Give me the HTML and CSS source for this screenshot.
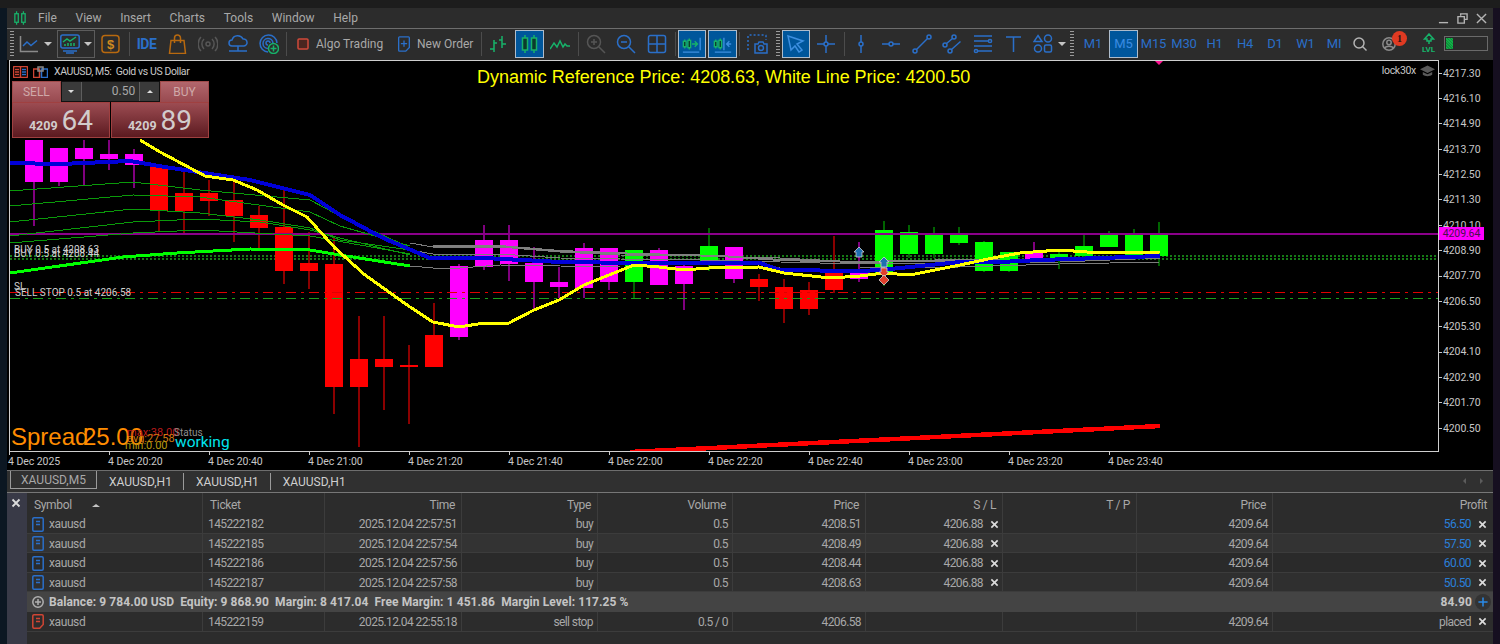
FILE: index.html
```html
<!DOCTYPE html>
<html lang="en">
<head>
<meta charset="utf-8">
<title>XAUUSD, M5</title>
<link rel="stylesheet" href="styles.css">
</head>
<body>
<div class="topstrip"></div>
<main class="app">
  <nav class="menubar">
    <svg class="logo" viewBox="0 0 14 16"><path class="ig" d="M3 0v3M3 13v3M11 0v3M11 13v3"/><rect class="ig" x="1" y="3" width="4" height="10"/><rect class="ig" x="9" y="3" width="4" height="10"/></svg>
    <span>File</span><span>View</span><span>Insert</span><span>Charts</span><span>Tools</span><span>Window</span><span>Help</span>
    <div class="winctl">
      <svg class="win" viewBox="0 0 12 12"><path class="iw" d="M1 10.5h10"/></svg>
      <svg class="win" viewBox="0 0 12 12"><path class="iw" d="M4 3V1h7v6H8.500M1 4h7v7H1z"/></svg>
      <svg class="win" viewBox="0 0 12 12"><path class="iw" d="M1 1l10 10M11 1L1 11"/></svg>
    </div>
  </nav>

  <div class="toolbar">
    <div class="tb w10"><i class="grip"></i></div>
    <div class="tb w24"><svg class="ic" viewBox="0 0 20 20"><path class="iy" d="M1.500 2v15.500H19"/><path class="ib" d="M4 12l4-4 4 3.500 6-5"/></svg></div>
    <div class="tb w13"><i class="caret"></i></div>
    <div class="tb w38 ml3 framed"><svg class="ic" viewBox="0 0 20 20"><rect class="ib" x="0.800" y="1" width="18.400" height="13" rx="2"/><path class="ib" d="M3 17h14M6 19h8"/><path class="ig" d="M3 8l4-3 3 2 6-4M5 12v-2M8 12v-3M11 12v-3M14 12V9"/></svg><i class="caret caret-in"></i></div>
    <div class="tb w32"><svg class="ic" viewBox="0 0 20 20"><rect class="io" x="1" y="1.500" width="17" height="17" rx="3"/><text class="dollar" x="9.500" y="15">$</text></svg></div>
    <div class="tb w4"><i class="sep"></i></div>
    <div class="tb w31"><span class="ide">IDE</span></div>
    <div class="tb w31"><svg class="ic" viewBox="0 0 20 20"><path class="io" d="M3 6.500h13l1.500 13h-16zM6.500 9V4a3 3 0 0 1 6 0v5"/></svg></div>
    <div class="tb w29"><svg class="ic" viewBox="0 0 20 20"><circle class="idim" cx="10" cy="10" r="2"/><path class="idim" d="M6 5a7 7 0 0 0 0 10M14 5a7 7 0 0 1 0 10M3 3a10 10 0 0 0 0 14M17 3a10 10 0 0 1 0 14"/></svg></div>
    <div class="tb w31"><svg class="ic" viewBox="0 0 20 20"><path class="ib" d="M4 12a3 3 0 0 1 0-6 6 6 0 0 1 11-1 3.500 3.500 0 0 1 1 7zM10 12v5M1 17h18"/></svg></div>
    <div class="tb w31"><svg class="ic" viewBox="0 0 20 20"><path class="ib" d="M9 18a8.500 8.500 0 1 1 9-9M9 14.500a5 5 0 1 1 5-5.500M9 11a2 2 0 1 1 2-2"/><circle class="pluscirc" cx="14.500" cy="14.500" r="5"/><path class="ig" d="M14.500 11.500v6M11.500 14.500h6"/></svg></div>
    <div class="tb w4"><i class="sep"></i></div>
    <div class="tb w102 labeled"><svg class="ic12" viewBox="0 0 12 12"><rect class="algo" x="1" y="1" width="10" height="10" rx="1"/></svg><span>Algo Trading</span></div>
    <div class="tb w87 labeled2"><svg class="ic14" viewBox="0 0 14 18"><path class="ib" d="M2 1h10a1 1 0 0 1 1 1v11l-4 4H2a1 1 0 0 1-1-1V2a1 1 0 0 1 1-1zM7 5v7M3.500 8.500h7"/></svg><span>New Order</span></div>
    <div class="tb w8"><i class="sep"></i></div>
    <div class="tb w25"><svg class="ic" viewBox="0 0 20 20"><path class="ig" d="M6 6v12M2 15h4M6 9h3M14 2v12M14 6h-3M14 10h4"/></svg></div>
    <div class="tb w29 ml5 sel"><svg class="ic" viewBox="0 0 20 20"><path class="ig" d="M5 1v3M5 16v3M14 1v3M14 16v3"/><rect class="ig2" x="2.500" y="4" width="5" height="12"/><rect class="ig2" x="11.500" y="4" width="5" height="12"/></svg></div>
    <div class="tb w32"><svg class="ic" viewBox="0 0 20 20"><path class="ig" d="M0 15l4-6 3 4 3-6 3 6 2-3 2 2h3"/></svg></div>
    <div class="tb w4"><i class="sep"></i></div>
    <div class="tb w31"><svg class="ic" viewBox="0 0 20 20"><circle class="idim2" cx="8" cy="8" r="6.500"/><path class="idim2" d="M8 5v6M5 8h6M13 13l6 6"/></svg></div>
    <div class="tb w30"><svg class="ic" viewBox="0 0 20 20"><circle class="ib" cx="8" cy="8" r="6.500"/><path class="ib" d="M5 8h6M13 13l6 6"/></svg></div>
    <div class="tb w32"><svg class="ic" viewBox="0 0 20 20"><rect class="ib" x="1.500" y="1.500" width="17" height="17" rx="2"/><path class="ib" d="M10 1.500v17M1.500 10h17"/></svg></div>
    <div class="tb w4"><i class="sep"></i></div>
    <div class="tb w28 ml1 sel"><svg class="ic" viewBox="0 0 22 20"><path class="ig" d="M3 5v10M8 4v12"/><rect class="ig2" x="1.500" y="7" width="3" height="6"/><rect class="ig2" x="6.500" y="6" width="3" height="8"/><path class="ig" d="M11 10h5M14 7l3 3-3 3"/><path class="ibl" d="M20 3v14M1 19h18"/></svg></div>
    <div class="tb w29 ml2 sel"><svg class="ic" viewBox="0 0 22 20"><path class="ig" d="M3 5v10M8 4v12"/><rect class="ig2" x="1.500" y="7" width="3" height="6"/><rect class="ig2" x="6.500" y="6" width="3" height="8"/><path class="ibl" d="M12 3v14M2 19h18M20 10h-5M18 7l-3 3 3 3"/></svg></div>
    <div class="tb w4"><i class="sep"></i></div>
    <div class="tb w33"><svg class="ic22" viewBox="0 0 22 20"><path class="ibd" d="M1 16V2a1 1 0 0 1 1-1h16a1 1 0 0 1 1 1v4"/><path class="ib" d="M8 10h3l1-2h4l1 2h3v9H8z"/><circle class="ib" cx="14" cy="14" r="2.500"/></svg></div>
    <div class="tb w7"><i class="grip"></i></div>
    <div class="tb w28 ml1 sel"><svg class="ic" viewBox="0 0 20 20"><path class="ibl" d="M2 2l15 5-6 3 5 6-3 2-4-6-4 4z"/></svg></div>
    <div class="tb w32"><svg class="ic" viewBox="0 0 20 20"><circle class="ib" cx="10" cy="10" r="2"/><path class="ib" d="M10 1v7M10 12v7M1 10h7M12 10h7"/></svg></div>
    <div class="tb w4"><i class="sep"></i></div>
    <div class="tb w30"><svg class="ic" viewBox="0 0 20 20"><circle class="ib" cx="10" cy="10" r="2"/><path class="ib" d="M10 1v7M10 12v7"/></svg></div>
    <div class="tb w30"><svg class="ic" viewBox="0 0 20 20"><circle class="ib" cx="10" cy="10" r="2"/><path class="ib" d="M1 10h7M12 10h7"/></svg></div>
    <div class="tb w31"><svg class="ic" viewBox="0 0 20 20"><circle class="ib" cx="3" cy="17" r="2"/><circle class="ib" cx="17" cy="3" r="2"/><path class="ib" d="M4.500 15.500l11-11"/></svg></div>
    <div class="tb w30"><svg class="ic" viewBox="0 0 20 20"><circle class="ib" cx="3" cy="11" r="2"/><circle class="ib" cx="12" cy="3" r="2"/><circle class="ib" cx="8" cy="17" r="2"/><path class="ib" d="M4.500 9.500l6-5M9.500 15.500l9-8"/></svg></div>
    <div class="tb w32"><svg class="ic" viewBox="0 0 20 20"><path class="ib" d="M1 2h18M1 7h14M1 12h18M5 17h14"/><circle class="ib" cx="17" cy="7" r="1.600"/><circle class="ib" cx="3" cy="17" r="1.600"/></svg></div>
    <div class="tb w30"><svg class="ic" viewBox="0 0 20 20"><path class="ib" d="M2 3h15M9.500 3v15"/></svg></div>
    <div class="tb w28"><svg class="ic" viewBox="0 0 20 20"><path class="ib" d="M5 1.500l4 6H1z"/><circle class="ib" cx="15" cy="4.500" r="3.500"/><circle class="ib" cx="5" cy="14.500" r="3.500"/><rect class="ib" x="11.500" y="11" width="7" height="7" rx="1.500"/></svg></div>
    <div class="tb w10"><i class="caret"></i></div>
    <div class="tb w10"><i class="grip"></i></div>
    <div class="tb w32 tf">M1</div>
    <div class="tb w29 tf sel">M5</div>
    <div class="tb w31 tf">M15</div>
    <div class="tb w30 tf">M30</div>
    <div class="tb w31 tf">H1</div>
    <div class="tb w30 tf">H4</div>
    <div class="tb w30 tf">D1</div>
    <div class="tb w31 tf">W1</div>
    <div class="tb w26 tf">MI</div>
    <div class="tb w26"><svg class="ic14" viewBox="0 0 14 14"><circle class="iw" cx="6" cy="6" r="5"/><path class="iw" d="M9.500 9.500l4 4"/></svg></div>
    <div class="tb w40 acct"><svg class="ic14" viewBox="0 0 14 14"><circle class="iy" cx="7" cy="7" r="6.200"/><circle class="iy" cx="7" cy="5.500" r="2.200"/><path class="iy" d="M2.500 11.500c1-3 8-3 9 0"/></svg><b class="badge">1</b></div>
    <div class="tb w31 lvl"><svg class="ic12" viewBox="0 0 12 12"><path class="ig" d="M6 1L1.500 6h2.500v2h4V6h2.500zM6 8v3"/></svg><span>LVL</span></div>
    <div class="tb w44"><div class="meter"><i class="meter-fill"></i></div></div>
  </div>

  <section class="chartwrap">
    <div class="plot">
      <svg class="canvas" viewBox="10 61 1428 390">
        <path class="line-dot" d="M10 256H1438M10 259H1438"/>
        <g class="wk-m">
          <path d="M34 140V226M59 148V186M84 140V186M109 140V170M134 149V188M459 264V340M484 225V270M509 225V281M534 247V309M559 267V298M584 243V298M609 248V290M659 248V285M684 265V310M734 247V283M859 242V282M1034 242V259"/>
        </g>
        <g class="wk-r">
          <path d="M159 165V232M184 172V234M209 180V216M234 182V242M259 206V250M284 190V284M309 232V289M334 238V414M359 316V447M384 316V410M409 345V424M434 303V367M759 274V301M784 279V323M809 282V315M834 236V293"/>
        </g>
        <g class="wk-g">
          <path d="M634 250V298M709 228V271M884 221V286M909 225V258M934 227V258M959 227V245M984 241V272M1009 252V272M1059 250V269M1084 235V258M1109 231V247M1134 229V256M1159 222V266"/>
        </g>
        <g class="bd-m">
          <rect x="25" y="140" width="18" height="42"/><rect x="50" y="148" width="18" height="34"/><rect x="75" y="148" width="18" height="11"/><rect x="100" y="154" width="18" height="5"/><rect x="125" y="154" width="18" height="11"/>
          <rect x="450" y="266" width="18" height="71"/><rect x="475" y="240" width="18" height="27"/><rect x="500" y="240" width="18" height="24"/><rect x="525" y="263" width="18" height="19"/><rect x="550" y="282" width="18" height="5"/><rect x="575" y="248" width="18" height="40"/><rect x="600" y="248" width="18" height="34"/><rect x="650" y="250" width="18" height="35"/><rect x="675" y="266" width="18" height="18"/><rect x="725" y="247" width="18" height="32"/><rect x="850" y="273" width="18" height="6"/><rect x="1025" y="253" width="18" height="7"/>
        </g>
        <g class="bd-r">
          <rect x="150" y="167" width="18" height="44"/><rect x="175" y="193" width="18" height="18"/><rect x="200" y="193" width="18" height="8"/><rect x="225" y="200" width="18" height="16"/><rect x="250" y="215" width="18" height="13"/><rect x="275" y="227" width="18" height="44"/><rect x="300" y="263" width="18" height="8"/><rect x="325" y="264" width="18" height="123"/><rect x="350" y="359" width="18" height="28"/><rect x="375" y="359" width="18" height="8"/><rect x="400" y="365" width="18" height="2"/><rect x="425" y="335" width="18" height="32"/>
          <rect x="750" y="279" width="18" height="8"/><rect x="775" y="287" width="18" height="22"/><rect x="800" y="290" width="18" height="19"/><rect x="825" y="273" width="18" height="17"/>
        </g>
        <g class="bd-g">
          <rect x="625" y="250" width="18" height="32"/><rect x="700" y="246" width="18" height="19"/><rect x="875" y="230" width="18" height="43"/><rect x="900" y="232" width="18" height="22"/><rect x="925" y="235" width="18" height="19"/><rect x="950" y="235" width="18" height="8"/><rect x="975" y="242" width="18" height="29"/><rect x="1000" y="252" width="18" height="19"/><rect x="1050" y="254" width="18" height="6"/><rect x="1075" y="246" width="18" height="10"/><rect x="1100" y="234" width="18" height="13"/><rect x="1125" y="234" width="18" height="22"/><rect x="1150" y="234" width="18" height="22"/>
        </g>
        <path class="line-purple" d="M10 234H1438"/>
        <path class="line-reddash" d="M10 292.500H1438"/>
        <path class="line-greendash" d="M10 298.500H1438"/>
        <g class="ma-thin">
          <polyline points="10,191 133,182 200,190 310,200 340,216 400,243"/>
          <polyline points="10,206 133,195 200,197 310,212 340,226 410,246"/>
          <polyline points="10,222 133,209 200,213 260,220 310,228 340,240 410,250"/>
          <polyline points="10,236 133,222 200,219 260,222 310,230 340,238 410,255"/>
          <polyline points="10,243 133,233 200,230 310,236 410,254"/>
        </g>
        <g class="ma-gray">
          <polyline points="410,243 433,247 500,247 560,252 620,255 700,256 780,258 860,262 960,261 1060,260 1160,256"/>
          <polyline points="410,250 433,254 500,254 560,258 620,259 700,260 780,262 860,264 960,263 1060,262 1160,258"/>
          <polyline points="410,266 433,268 460,268 500,265 620,267 700,267 780,268 860,268 960,267 1060,264 1160,262"/>
        </g>
        <polyline class="ma-gray-bold" points="433,246 500,246 560,251 640,254 720,256 780,260 860,262 960,260 1000,260"/>
        <polyline class="ma-lime" points="10,273 123,257 177,253 250,249 310,250 340,255 410,266"/>
        <polyline class="ma-blue" points="10,163 60,164 130,161 165,167 250,180 310,195 340,215 383,238 430,258 484,258 560,262 640,263 700,263 760,263 780,270 860,271 880,270 900,268 960,262 1000,262 1040,260 1100,258 1160,256"/>
        <polyline class="ma-yellow" points="140,140 160,152 190,168 205,176 233,180 257,190 283,205 307,217 335,248 365,275 410,307 433,322 459,327 484,323 509,323 534,310 559,300 584,285 609,275 634,265 659,267 684,270 709,268 759,267 784,273 830,278 860,276 884,273 910,275 960,265 993,258 1020,253 1060,250 1100,253 1160,252"/>
        <polyline class="ma-red" points="630,452 1160,426"/>
        <polygon class="mark-up" points="859,247 864,252 862,252 862,257 856,257 856,252 854,252"/>
        <polygon class="mark-up" points="884,257 889,262 887,262 887,267 881,267 881,262 879,262"/>
        <polygon class="mark-dn" points="881,268 887,268 887,272 889,272 884,277 879,272 881,272"/>
        <polygon class="mark-dn" points="884,275 889,280 884,285 879,280"/>
        <polygon class="mark-top" points="1155,61 1163,61 1159,65"/>
        <g class="order-label">
          <text x="14" y="253">BUY 0.5 at 4208.63</text>
          <text x="14" y="257">BUY 0.5 at 4208.44</text>
          <text x="14" y="290">SL</text>
          <text x="15" y="296">SELL STOP 0.5 at 4206.58</text>
        </g>
        <text class="stat-spread" x="11" y="445">Spread</text>
        <text class="stat-spread" x="83" y="445">25.00</text>
        <text class="stat-max" x="127" y="436">max:38.00</text>
        <text class="stat-avg" x="127" y="442">avg:27.58</text>
        <text class="stat-min" x="125" y="449">min:0.00</text>
        <text class="stat-status" x="174" y="436">Status</text>
        <text class="stat-work" x="175" y="447">working</text>
      </svg>
      <div class="chart-title">
        <svg class="ch-ic" viewBox="0 0 15 12"><rect class="ired" x="0.500" y="0.500" width="14" height="11" rx="1"/><path class="ired" d="M7.500 1v10M2 3.500h4M2 6h4M2 8.500h4"/><path class="ib" d="M9 3.500h4M9 6h4M9 8.500h4"/></svg>
        <svg class="ch-ic" viewBox="0 0 15 12"><path class="ired" d="M.5 3h6v8.500h-6z"/><path class="ib" d="M8.500 3h6v8.500h-6z"/><path class="iy" d="M5 1h5v4H5z"/></svg>
        <span>XAUUSD, M5:&nbsp; Gold vs US Dollar</span>
      </div>
      <div class="headline">Dynamic Reference Price: 4208.63, White Line Price: 4200.50</div>
      <div class="lock"><span>lock30x</span><svg class="hat" viewBox="0 0 16 12"><path d="M8 0L0 4l8 4 8-4zM3 7v3c2 2 8 2 10 0V7L8 9.500z"/></svg></div>
      <div class="trade">
        <div class="trade-top">
          <div class="head"><span>SELL</span></div>
          <div class="spin"><i class="sp-btn"><i class="caret caret-sm"></i></i><span class="sp-val">0.50</span><i class="sp-btn"><i class="caret caret-up"></i></i></div>
          <div class="head"><span>BUY</span></div>
        </div>
        <div class="trade-bot">
          <div class="quote"><b>4209</b><span>64</span></div>
          <div class="quote"><b>4209</b><span>89</span></div>
        </div>
      </div>
    </div>
    <div class="price-axis">
      <span>4217.30</span><span>4216.10</span><span>4214.90</span><span>4213.70</span><span>4212.50</span><span>4211.30</span><span>4210.10</span><span>4208.90</span><span>4207.70</span><span>4206.50</span><span>4205.30</span><span>4204.10</span><span>4202.90</span><span>4201.70</span><span>4200.50</span>
      <em class="price-tag">4209.64</em>
    </div>
    <div class="time-axis">
      <span>4 Dec 2025</span><span>4 Dec 20:20</span><span>4 Dec 20:40</span><span>4 Dec 21:00</span><span>4 Dec 21:20</span><span>4 Dec 21:40</span><span>4 Dec 22:00</span><span>4 Dec 22:20</span><span>4 Dec 22:40</span><span>4 Dec 23:00</span><span>4 Dec 23:20</span><span>4 Dec 23:40</span>
    </div>
  </section>

  <div class="tabs">
    <span class="tab active">XAUUSD,M5</span><span class="tab">XAUUSD,H1</span><span class="tab">XAUUSD,H1</span><span class="tab last">XAUUSD,H1</span>
    <div class="tabnav"><i class="nav-l"></i><i class="nav-r"></i></div>
  </div>

  <section class="panel">
    <aside class="rail"><svg class="x-big" viewBox="0 0 10 10"><path d="M1.500 1.500l7 7M8.500 1.500l-7 7"/></svg></aside>
    <div class="grid">
      <div class="row hdr">
        <div class="c sym-h">Symbol<i class="caret caret-up sort"></i></div><div class="c l">Ticket</div><div class="c">Time</div><div class="c">Type</div><div class="c">Volume</div><div class="c">Price</div><div class="c">S / L</div><div class="c">T / P</div><div class="c">Price</div><div class="c">Profit</div>
      </div>
      <div class="row pos">
        <div class="c sym"><svg class="doc" viewBox="0 0 12 15"><path class="ib" d="M2 .8h8a1.200 1.200 0 0 1 1.200 1.200v11a1.200 1.200 0 0 1-1.200 1.200H2A1.200 1.200 0 0 1 .8 13V2A1.200 1.200 0 0 1 2 .8zM4 4.500h4M4 7.500h4"/></svg>xauusd</div>
        <div class="c l2">145222182</div><div class="c">2025.12.04 22:57:51</div><div class="c">buy</div><div class="c">0.5</div><div class="c">4208.51</div><div class="c x">4206.88<svg class="x-s" viewBox="0 0 10 10"><path d="M1.500 1.500l7 7M8.500 1.500l-7 7"/></svg></div><div class="c"></div><div class="c">4209.64</div><div class="c xe pf">56.50<svg class="x-s" viewBox="0 0 10 10"><path d="M1.500 1.500l7 7M8.500 1.500l-7 7"/></svg></div>
      </div>
      <div class="row pos alt">
        <div class="c sym"><svg class="doc" viewBox="0 0 12 15"><path class="ib" d="M2 .8h8a1.200 1.200 0 0 1 1.200 1.200v11a1.200 1.200 0 0 1-1.200 1.200H2A1.200 1.200 0 0 1 .8 13V2A1.200 1.200 0 0 1 2 .8zM4 4.500h4M4 7.500h4"/></svg>xauusd</div>
        <div class="c l2">145222185</div><div class="c">2025.12.04 22:57:54</div><div class="c">buy</div><div class="c">0.5</div><div class="c">4208.49</div><div class="c x">4206.88<svg class="x-s" viewBox="0 0 10 10"><path d="M1.500 1.500l7 7M8.500 1.500l-7 7"/></svg></div><div class="c"></div><div class="c">4209.64</div><div class="c xe pf">57.50<svg class="x-s" viewBox="0 0 10 10"><path d="M1.500 1.500l7 7M8.500 1.500l-7 7"/></svg></div>
      </div>
      <div class="row pos dark">
        <div class="c sym"><svg class="doc" viewBox="0 0 12 15"><path class="ib" d="M2 .8h8a1.200 1.200 0 0 1 1.200 1.200v11a1.200 1.200 0 0 1-1.200 1.200H2A1.200 1.200 0 0 1 .8 13V2A1.200 1.200 0 0 1 2 .8zM4 4.500h4M4 7.500h4"/></svg>xauusd</div>
        <div class="c l2">145222186</div><div class="c">2025.12.04 22:57:56</div><div class="c">buy</div><div class="c">0.5</div><div class="c">4208.44</div><div class="c x">4206.88<svg class="x-s" viewBox="0 0 10 10"><path d="M1.500 1.500l7 7M8.500 1.500l-7 7"/></svg></div><div class="c"></div><div class="c">4209.64</div><div class="c xe pf">60.00<svg class="x-s" viewBox="0 0 10 10"><path d="M1.500 1.500l7 7M8.500 1.500l-7 7"/></svg></div>
      </div>
      <div class="row pos mid">
        <div class="c sym"><svg class="doc" viewBox="0 0 12 15"><path class="ib" d="M2 .8h8a1.200 1.200 0 0 1 1.200 1.200v11a1.200 1.200 0 0 1-1.200 1.200H2A1.200 1.200 0 0 1 .8 13V2A1.200 1.200 0 0 1 2 .8zM4 4.500h4M4 7.500h4"/></svg>xauusd</div>
        <div class="c l2">145222187</div><div class="c">2025.12.04 22:57:58</div><div class="c">buy</div><div class="c">0.5</div><div class="c">4208.63</div><div class="c x">4206.88<svg class="x-s" viewBox="0 0 10 10"><path d="M1.500 1.500l7 7M8.500 1.500l-7 7"/></svg></div><div class="c"></div><div class="c">4209.64</div><div class="c xe pf">50.50<svg class="x-s" viewBox="0 0 10 10"><path d="M1.500 1.500l7 7M8.500 1.500l-7 7"/></svg></div>
      </div>
      <div class="balance">
        <svg class="doc" viewBox="0 0 12 12"><circle class="iy2" cx="6" cy="6" r="5.200"/><path class="iy2" d="M3 6h6M6 3v6"/></svg>
        <span class="bal-text">Balance: 9 784.00 USD&nbsp; Equity: 9 868.90&nbsp; Margin: 8 417.04&nbsp; Free Margin: 1 451.86&nbsp; Margin Level: 117.25 %</span>
        <span class="bal-total">84.90</span>
        <span class="bal-plus"><svg class="plus" viewBox="0 0 12 12"><path d="M6 .5v11M.5 6h11"/></svg></span>
      </div>
      <div class="row">
        <div class="c sym"><svg class="doc" viewBox="0 0 12 15"><path class="ired" d="M2 .8h8a1.200 1.200 0 0 1 1.200 1.200v8.500l-3.500 3.700H2A1.200 1.200 0 0 1 .8 13V2A1.200 1.200 0 0 1 2 .8zM4 4.500h4M4 7.500h4"/></svg>xauusd</div>
        <div class="c l2">145222159</div><div class="c">2025.12.04 22:55:18</div><div class="c">sell stop</div><div class="c">0.5 / 0</div><div class="c">4206.58</div><div class="c"></div><div class="c"></div><div class="c">4209.64</div><div class="c xe">placed<svg class="x-s" viewBox="0 0 10 10"><path d="M1.500 1.500l7 7M8.500 1.500l-7 7"/></svg></div>
      </div>
    </div>
  </section>
</main>
</body>
</html>
```

FILE: styles.css
```css
* { box-sizing: border-box; }
html, body { margin: 0; height: 644px; overflow: hidden; }
body {
  background: linear-gradient(90deg, #0c1722 0 7px, #160f20 7px);
  font-family: Roboto, "Liberation Sans", sans-serif;
  color: #a8a8a8;
}
.topstrip { height: 8px; background: #1d1d1d; }
.app { margin: 0 7px; width: 1486px; height: 636px; background: #2c2c2c; display: flex; flex-direction: column; }

/* icon stroke palette */
svg { display: block; }
.ib, .ibl, .ibd, .ig, .ig2, .io, .iy, .iy2, .iw, .idim, .idim2, .ired { fill: none; stroke-width: 1.500; }
.ib { stroke: #2a6fc9; }
.ibl { stroke: #3d8fe0; }
.ibd { stroke: #2a6fc9; stroke-dasharray: 2 2; }
.ig { stroke: #17b26a; }
.ig2 { stroke: #17b26a; fill: #0b3b2c; }
.io { stroke: #b8690f; }
.iy { stroke: #8a8a8a; }
.iy2 { stroke: #b0b0b0; }
.iw { stroke: #b4b4b4; }
.idim { stroke: #565656; }
.idim2 { stroke: #555; }
.ired { stroke: #cf4534; }
.pluscirc { fill: #2c2c2c; stroke: #17b26a; stroke-width: 1.500; }
.algo { fill: #4a2620; stroke: #d0493a; stroke-width: 1.500; }
.dollar { fill: #d08a20; font: 700 13px "Liberation Sans", sans-serif; text-anchor: middle; }
.ic { width: 20px; height: 20px; }
.ic22 { width: 22px; height: 20px; }
.ic12 { width: 12px; height: 12px; flex: none; }
.ic14 { width: 14px; height: 16px; flex: none; }

/* menu */
.menubar { height: 21px; flex: none; display: flex; align-items: center; gap: 18.700px; font-size: 12px; color: #a9a9a9; padding-left: 7px; border-bottom: 1px solid #6e6e6e; }
.logo { width: 12px; height: 14px; margin-right: -6.700px; }
.winctl { margin-left: auto; display: flex; gap: 8px; padding-right: 6px; }
.win { width: 11px; height: 11px; }

/* toolbar */
.toolbar { height: 31px; flex: none; display: flex; align-items: center; padding-bottom: 2px; }
.tb { flex: none; height: 28px; display: flex; align-items: center; justify-content: center; font-size: 12px; color: #a9a9a9; }
.w4 { width: 4px; } .w7 { width: 7px; } .w8 { width: 8px; } .w10 { width: 10px; } .w13 { width: 13px; }
.w24 { width: 24px; } .w25 { width: 25px; } .w26 { width: 26px; } .w28 { width: 28px; } .w29 { width: 29px; }
.w30 { width: 30px; } .w31 { width: 31px; } .w32 { width: 32px; } .w33 { width: 33px; } .w38 { width: 38px; }
.w40 { width: 40px; } .w44 { width: 44px; } .w87 { width: 87px; } .w102 { width: 102px; }
.ml1 { margin-left: 1px; } .ml2 { margin-left: 2px; } .ml3 { margin-left: 3px; } .ml5 { margin-left: 5px; }
.grip { display: block; width: 4px; height: 28px; background: radial-gradient(circle, #9a9a9a 0 1px, transparent 1.100px) 0 0 / 2px 3px; }
.sep { display: block; width: 1px; height: 24px; background: #4c4c4c; }
.caret { display: block; width: 0; height: 0; border: 4px solid transparent; border-top: 4px solid #c4c4c4; border-bottom: 0; }
.caret-in { margin-left: 4px; }
.framed { border: 1px solid #5c5c5c; justify-content: flex-start; padding-left: 2px; }
.sel { background: #00569b; border: 1px solid #aebccb; color: #2f84e0; }
.ide { font: 700 14px Roboto, sans-serif; color: #2a6fc9; letter-spacing: -.5px; }
.labeled { justify-content: flex-start; padding-left: 9px; gap: 7px; }
.labeled2 { justify-content: flex-start; padding-left: 7px; gap: 6px; }
.tf { font-size: 13px; color: #2a6fc9; letter-spacing: -.2px; }
.tf.sel { color: #3a8be2; }
.acct { position: relative; justify-content: flex-start; padding-left: 9px; }
.badge { position: absolute; left: 19px; top: 1px; width: 15px; height: 15px; border-radius: 50%; background: #e03a22; color: #2a1512; font: 700 10px/15px "Liberation Serif", serif; text-align: center; }
.lvl { flex-direction: column; gap: 0; color: #17b26a; font: 700 8px/9px Roboto, sans-serif; }
.meter { width: 44px; height: 15px; border: 1px solid #6a6a6a; background: #2a2a2a; padding: 1px; }
.meter-fill { display: block; width: 7px; height: 100%; background: repeating-linear-gradient(45deg, #0f8f3a 0 1px, #12b048 1px 2px); }

/* chart */
.chartwrap { flex: none; height: 410px; background: #000; display: grid; grid-template-columns: 1432px 54px; grid-template-rows: 392px 18px; }
.plot { position: relative; margin-left: 2px; border: 1px solid #cfcfcf; background: #000; overflow: hidden; }
.canvas { width: 1428px; height: 390px; }
.canvas path, .canvas rect, .canvas polyline { shape-rendering: crispEdges; }
.wk-m path { stroke: #80007f; stroke-width: 2; fill: none; }
.wk-r path { stroke: #8b0000; stroke-width: 2; fill: none; }
.wk-g path { stroke: #006400; stroke-width: 2; fill: none; }
.bd-m { fill: #ff00ff; }
.bd-r { fill: #ff0000; }
.bd-g { fill: #00ff00; }
.line-dot { stroke: #167a16; stroke-width: 2; stroke-dasharray: 2 2; fill: none; }
.line-purple { stroke: #8b008b; stroke-width: 2; fill: none; }
.line-reddash { stroke: #e00000; stroke-width: 1; stroke-dasharray: 10 5 3 5; fill: none; }
.line-greendash { stroke: #1aa01a; stroke-width: 1; stroke-dasharray: 10 5 3 5; fill: none; }
.ma-thin polyline { fill: none; stroke: #0a9a0a; stroke-width: 1; }
.ma-gray polyline { fill: none; stroke: #7c7c7c; stroke-width: 1; }
.ma-gray-bold { fill: none; stroke: #808080; stroke-width: 2; }
.ma-lime { fill: none; stroke: #00ff00; stroke-width: 3; }
.ma-blue { fill: none; stroke: #0000d8; stroke-width: 4; }
.ma-yellow { fill: none; stroke: #ffff00; stroke-width: 3; }
.ma-red { fill: none; stroke: #ff0000; stroke-width: 4.500; }
.mark-up { fill: #1f6fb0; stroke: #cfcfcf; stroke-width: .8; }
.mark-dn { fill: #e0402c; stroke: #cfcfcf; stroke-width: .8; }
.mark-top { fill: #ff1493; }
.order-label text { fill: #d0d0d0; font: 10px Roboto, sans-serif; }
.stat-spread { fill: #ff8c00; font: 24px "Liberation Sans", sans-serif; }
.stat-max { fill: #b81a1a; font: 11px Roboto, sans-serif; }
.stat-avg { fill: #d27a10; font: 11px Roboto, sans-serif; }
.stat-min { fill: #b89a10; font: 11px Roboto, sans-serif; }
.stat-status { fill: #8f8f8f; font: 10px Roboto, sans-serif; }
.stat-work { fill: #00e5ee; font: 15.500px Roboto, sans-serif; }

.chart-title { position: absolute; left: 3px; top: 3px; height: 15px; display: flex; align-items: center; gap: 5px; font-size: 10.500px; letter-spacing: -.4px; color: #c8c8c8; }
.ch-ic { width: 15px; height: 12px; flex: none; }
.chart-title span { margin-left: 1px; }
.headline { position: absolute; left: 467px; top: 4px; font: 18px/24px "Liberation Sans", sans-serif; letter-spacing: -.035px; color: #ffff00; white-space: nowrap; }
.lock { position: absolute; right: 3px; top: 3px; display: flex; align-items: center; gap: 4px; font-size: 10.500px; letter-spacing: -.3px; color: #c8c8c8; }
.hat { width: 15px; height: 12px; fill: #5a5a5a; }

.trade { position: absolute; left: 2px; top: 20px; width: 197px; }
.trade-top { display: flex; height: 21px; align-items: stretch; }
.head { width: 49px; padding: 0 3px; background: linear-gradient(#b2666c, #984a50); border: 1px solid #a04a4a; border-bottom: 0; text-align: center; font-size: 12px; line-height: 20px; color: #cfa9a9; }
.head span { display: block; height: 21px; border-bottom: 1px solid #c88b88; }
.spin { width: 100px; height: 21px; display: flex; background: #333; border: 1px solid #111; }
.sp-btn { display: flex; width: 19px; align-items: center; justify-content: center; background: #3a3a3a; }
.sp-val { flex: 1; text-align: right; padding-right: 4px; font-size: 12px; line-height: 19px; color: #a8a8a8; border-left: 1px solid #5e5e5e; border-right: 1px solid #5e5e5e; background: #2e2e2e; }
.caret-sm { border-width: 3px; border-top-color: #ddd; border-bottom: 0; }
.caret-up { border: 3px solid transparent; border-bottom: 3px solid #ddd; border-top: 0; }
.trade-bot { display: flex; gap: 1px; }
.quote { width: 98px; height: 36px; background: linear-gradient(#9c4c52, #5c1a20); border: 1px solid #a04040; display: flex; align-items: baseline; justify-content: center; color: #d2cccc; padding-top: 4px; gap: 4px; }
.quote b { font-size: 12.500px; }
.quote span { font-size: 28px; line-height: 28px; }

.price-axis { position: relative; display: grid; grid-auto-rows: 25.360px; align-content: start; font-size: 10.500px; letter-spacing: -.1px; color: #c8c8c8; padding-top: .5px; }
.price-axis span { display: flex; align-items: center; gap: 1px; line-height: 25.360px; }
.price-axis span::before { content: ""; width: 3px; height: 1px; background: #c8c8c8; }
.price-tag { position: absolute; left: 0; top: 167px; width: 45px; height: 13px; background: #ff00ff; color: #4a104a; font-style: normal; font-size: 10.500px; line-height: 13px; text-align: center; }
.time-axis { grid-column: 1 / 3; display: flex; padding-left: 1px; font-size: 10.500px; letter-spacing: -.05px; color: #c8c8c8; }
.time-axis span { width: 100px; flex: none; line-height: 19px; position: relative; }
.time-axis span::before { content: ""; position: absolute; left: 1px; top: 0; width: 1px; height: 3px; background: #c8c8c8; }

/* tabs */
.tabs { height: 23px; flex: none; display: flex; align-items: flex-start; padding-left: 3px; border-top: 1px solid #6e6e6e; border-bottom: 1px solid #777; background: #303030; font-size: 12px; color: #cfcfcf; }
.tab { height: 17px; line-height: 19px; padding: 0 11px 0 12px; border-right: 1px solid #9a9a9a; margin-top: 2px; }
.tab.last { border-right: 0; }
.tab.active { width: 87px; height: 18px; margin-top: 0; border: 1px solid #9a9a9a; border-top: 0; padding: 0; text-align: center; color: #a8a8a8; line-height: 18px; }
.tabnav { margin-left: auto; display: flex; gap: 14px; padding: 7px 10px 0 0; }
.nav-l, .nav-r { display: block; width: 0; height: 0; border: 3px solid transparent; }
.nav-l { border-right-color: #5c5c5c; border-left: 0; }
.nav-r { border-left-color: #5c5c5c; border-right: 0; }

/* table */
.panel { flex: 1; display: flex; min-height: 0; }
.rail { width: 20px; flex: none; background: #393a47; padding: 5px 0 0 4px; }
.x-big { width: 10px; height: 10px; }
.x-big path, .x-s path { stroke: #dcdcdc; stroke-width: 1.800; fill: none; }
.grid { flex: 1; display: flex; flex-direction: column; font-size: 12px; }
.row { display: grid; grid-template-columns: 176px 122px 137px 136px 135px 133px 137px 134px 136px 1fr; height: 19.600px; border-bottom: 1px solid #3c3c3c; background: #2c2c2c; letter-spacing: -.6px; }
.row.alt { background: #333; }
.row.dark { background: #2a2a2a; }
.row.mid { background: #2f2f2f; }
.row.hdr { height: 21px; border-bottom: 0; letter-spacing: -.35px; }
.hdr .c { padding: 3px 6px 0 0; }
.c { display: flex; align-items: center; justify-content: flex-end; padding-right: 4px; border-right: 1px solid #3c3c3c; white-space: nowrap; line-height: 18px; min-width: 0; }
.pos .c { padding-top: 1px; }
.c:last-child { border-right: 0; }
.hdr .c.l { justify-content: flex-start; padding-left: 7px; }
.c.l2 { justify-content: flex-start; padding-left: 5px; }
.c.sym { justify-content: flex-start; padding-left: 5px; gap: 5px; letter-spacing: -.4px; }
.hdr .c.sym-h { justify-content: flex-start; padding-left: 7px; }
.sort { margin-left: 20px; border-width: 4px; border-bottom-width: 3px; border-bottom-color: #c4c4c4; }
.c.x { padding-right: 3px; }
.c.xe { padding-right: 6px; }
.pf { color: #2a7fd8; }
.doc { width: 12px; height: 15px; flex: none; }
.x-s { width: 9px; height: 9px; margin-left: 7px; flex: none; }
.balance { height: 20px; display: flex; align-items: center; background: #444; padding-left: 5px; font-weight: 700; font-size: 12px; letter-spacing: .08px; color: #c4c4c4; }
.balance .doc { height: 12px; margin-right: 5px; }
.bal-total { margin-left: auto; }
.bal-plus { width: 16px; height: 16px; margin: 0 2px 0 3px; border-radius: 50%; background: #333; display: flex; align-items: center; justify-content: center; }
.plus { width: 10px; height: 10px; }
.plus path { stroke: #2a8ae8; stroke-width: 1.800; fill: none; }
```
